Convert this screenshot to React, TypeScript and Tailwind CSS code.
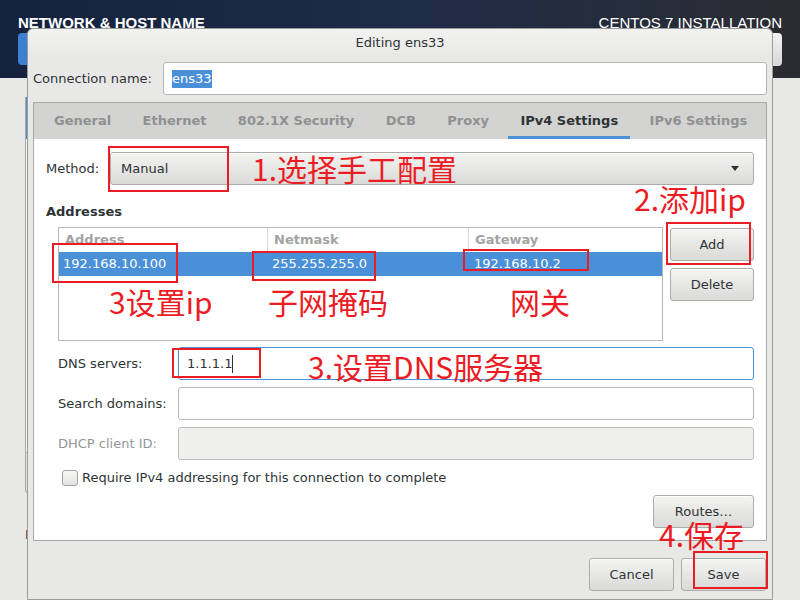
import React from "react";

function Btn({ children, className = "" }: { children?: React.ReactNode; className?: string }) {
  return (
    <div
      className={
        "flex items-center rounded-[3px] border border-[#acacaa] bg-linear-to-b from-[#f4f4f3] to-[#dadad8] text-[13px] text-[#2e3436] shadow-[inset_0_1px_0_rgba(255,255,255,0.9)] " +
        className
      }
    >
      {children}
    </div>
  );
}

function Field({ children, className = "" }: { children?: React.ReactNode; className?: string }) {
  return (
    <div className={"flex h-[33px] flex-1 items-center rounded-[3px] border pl-[8px] text-[13px] " + className}>
      {children}
    </div>
  );
}

const tabs = ["General", "Ethernet", "802.1X Security", "DCB", "Proxy", "IPv4 Settings", "IPv6 Settings"];

function Box({ l, t, w, h }: { l: number; t: number; w: number; h: number }) {
  return (
    <div
      className="absolute border-2 border-[#ec1c24]"
      style={{ left: l, top: t, width: w, height: h }}
    />
  );
}

function Note({ l, c, text }: { l: number; c: number; text: string }) {
  return (
    <div
      className="absolute whitespace-nowrap font-['Noto_Sans_CJK_SC',sans-serif] text-[30px] leading-[30px] text-[#ec1c24]"
      style={{ left: l, top: c - 15 }}
    >
      {text}
    </div>
  );
}

export default function App() {
  return (
    <div className="relative h-[600px] w-[800px] overflow-hidden bg-[#e8e8e7] font-['DejaVu_Sans',sans-serif] text-[#2e3436]">
      {/* installer header */}
      <div className="flex h-[78px] justify-between bg-linear-to-r from-[#14223e] via-[#1f2c48] to-[#2a2c31] px-[18px] font-['Liberation_Sans',sans-serif] text-white">
        <div className="flex flex-col">
          <div className="mt-[14px] text-[15px] font-bold leading-[17px]">NETWORK &amp; HOST NAME</div>
          <div className="mt-[2px] h-[32px] w-[80px] rounded-[4px] bg-[#3d7fd1]" />
        </div>
        <div className="flex flex-col items-end">
          <div className="mt-[14px] text-[15px] leading-[17px]">CENTOS 7 INSTALLATION</div>
          <div className="mt-[2px] h-[33px] w-[110px] rounded-[4px] bg-linear-to-b from-[#f2f2f2] to-[#d8d8d8]" />
        </div>
      </div>

      {/* spoke body behind dialog */}
      <div className="flex flex-col pl-[25px] pt-[19px]">
        <div className="flex h-[355px] w-[300px] flex-col border-l border-[#a8a8a8] bg-[#f4f4f3]">
          <div className="h-[42px] bg-[#4a90d9]" />
        </div>
        <div className="h-[42px] w-[300px] rounded-bl-[4px] border border-[#a8a8a8] bg-[#e2e2e0]" />
        <div className="mt-[31px] text-[13px]">Host name:</div>
      </div>

      {/* dialog */}
      <div className="absolute left-[27px] top-[28px] flex h-[572px] w-[746px] flex-col rounded-t-[6px] border border-[#9c9c9a] bg-[#e8e8e7] px-[5px]">
        <div className="-mx-[5px] flex h-[28px] items-center justify-center rounded-t-[6px] bg-linear-to-b from-[#f2f2f1] to-[#e8e8e7] text-[13px] text-[#2e3436]">
          Editing ens33
        </div>

        <div className="mt-[5px] flex h-[33px] items-center">
          <div className="w-[130px] text-[13px]">Connection name:</div>
          <Field className="border-[#b6b6b3] bg-white">
            <span className="bg-[#4a90d9] leading-[18px] text-white">ens33</span>
          </Field>
        </div>

        {/* notebook */}
        <div className="mt-[7px] flex flex-col border border-[#a8a8a6]">
          <div className="flex h-[36px] gap-[7.4px] bg-[#d3d3d1] pl-[8px]">
            {tabs.map((t) => (
              <div
                key={t}
                className={
                  "relative flex items-center px-[12px] text-[13px] font-bold " +
                  (t === "IPv4 Settings" ? "text-[#2e3436]" : "text-[#8f9191]")
                }
              >
                {t}
                {t === "IPv4 Settings" && (
                  <div className="absolute bottom-0 left-0 right-0 h-[3px] bg-[#4a90d9]" />
                )}
              </div>
            ))}
          </div>

          <div className="flex flex-col bg-white px-[12px] pb-[12px] pt-[13px] text-[13px]">
            <div className="flex h-[33px] items-center">
              <div className="w-[64px]">Method:</div>
              <Btn className="h-[33px] flex-1 justify-between pl-[10px] pr-[14px]">
                <span>Manual</span>
                <svg width="8" height="5" viewBox="0 0 8 5">
                  <path d="M0 0H8L4 5Z" fill="#2e3436" />
                </svg>
              </Btn>
            </div>

            <div className="mt-[19px] h-[16px] font-bold leading-[16px]">Addresses</div>

            <div className="mt-[7px] flex gap-[7px] pl-[12px]">
              <div className="flex h-[114px] flex-1 flex-col border border-[#b6b6b3] bg-white">
                <div className="flex h-[24px] items-center font-bold text-[#a3a3a3]">
                  <div className="flex h-full w-[209px] items-center border-r border-[#dcdcda] pl-[6px]">Address</div>
                  <div className="flex h-full w-[201px] items-center border-r border-[#dcdcda] pl-[6px]">Netmask</div>
                  <div className="flex h-full flex-1 items-center pl-[6px]">Gateway</div>
                </div>
                <div className="flex h-[24px] items-center bg-[#4a90d9] text-white">
                  <div className="w-[209px] pl-[4px]">192.168.10.100</div>
                  <div className="w-[201px] pl-[4px]">255.255.255.0</div>
                  <div className="flex-1 pl-[5px]">192.168.10.2</div>
                </div>
              </div>
              <div className="flex w-[84px] flex-col gap-[7px] pt-[1px]">
                <Btn className="h-[33px] justify-center">Add</Btn>
                <Btn className="h-[33px] justify-center">Delete</Btn>
              </div>
            </div>

            <div className="mt-[6px] flex h-[33px] items-center pl-[12px]">
              <div className="w-[120px]">DNS servers:</div>
              <Field className="border-[#4a90d9] bg-white">
                <span className="border-r border-[#2e3436] leading-[18px]">1.1.1.1</span>
              </Field>
            </div>
            <div className="mt-[7px] flex h-[33px] items-center pl-[12px]">
              <div className="w-[120px]">Search domains:</div>
              <Field className="border-[#b6b6b3] bg-white" />
            </div>
            <div className="mt-[7px] flex h-[33px] items-center pl-[12px]">
              <div className="w-[120px] text-[#949696]">DHCP client ID:</div>
              <Field className="border-[#bcbcba] bg-[#efefee]" />
            </div>

            <div className="mt-[10px] flex h-[16px] items-center pl-[16px]">
              <div className="h-[16px] w-[16px] rounded-[3px] border border-[#a3a3a1] bg-linear-to-b from-[#f8f8f7] to-[#e2e2e0]" />
              <div className="ml-[4px]">Require IPv4 addressing for this connection to complete</div>
            </div>

            <div className="mt-[9px] flex justify-end">
              <Btn className="h-[33px] w-[101px] justify-center">Routes…</Btn>
            </div>
          </div>
        </div>

        <div className="mt-[17px] flex justify-end gap-[7px] pr-[1px]">
          <Btn className="h-[33px] w-[85px] justify-center">Cancel</Btn>
          <Btn className="h-[33px] w-[85px] justify-center">Save</Btn>
        </div>
      </div>

      {/* red annotations */}
      <Box l={108} t={146} w={121} h={46} />
      <Box l={666} t={222} w={85} h={43} />
      <Box l={52} t={243} w={126} h={40} />
      <Box l={252} t={251} w={124} h={30} />
      <Box l={463} t={249} w={126} h={22} />
      <Box l={172} t={348} w={89} h={30} />
      <Box l={693} t={551} w={75} h={38} />

      <Note l={252} c={168} text="1.选择手工配置" />
      <Note l={634} c={198} text="2.添加ip" />
      <Note l={109} c={301} text="3设置ip" />
      <Note l={268} c={301} text="子网掩码" />
      <Note l={510} c={301} text="网关" />
      <Note l={308} c={366} text="3.设置DNS服务器" />
      <Note l={659} c={534} text="4.保存" />
    </div>
  );
}
